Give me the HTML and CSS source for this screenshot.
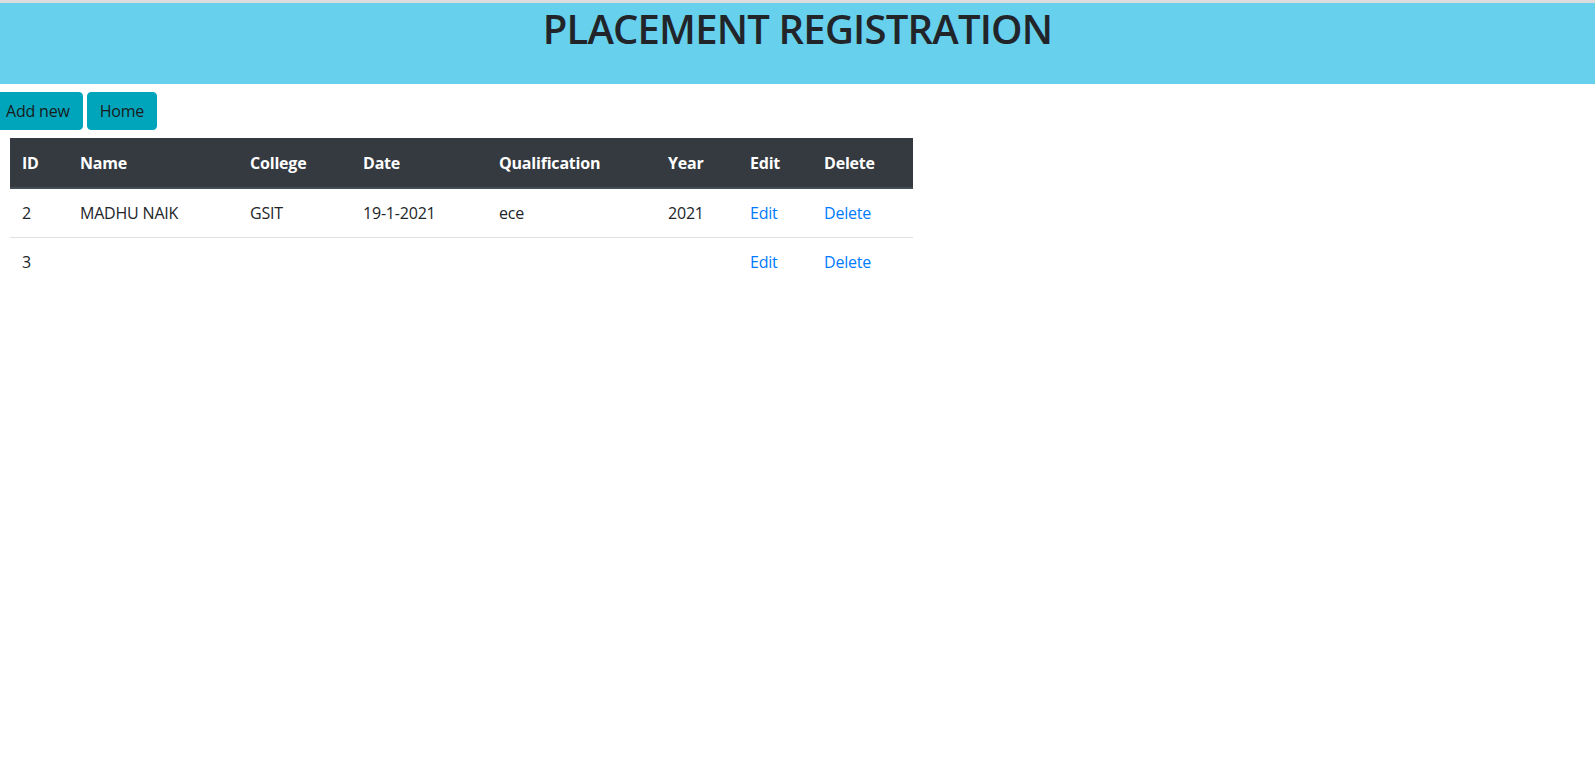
FILE: index.html
```html
<!DOCTYPE html>
<html lang="en">
<head>
<meta charset="utf-8">
<title>Placement Registration</title>
<link rel="stylesheet" href="styles.css">
</head>
<body>
<div class="topline"></div>
<header class="banner">
  <h1 class="title">PLACEMENT REGISTRATION</h1>
</header>
<div class="actions">
  <a class="btn btn-first" href="#">Add new</a>
  <a class="btn" href="#">Home</a>
</div>
<table class="grid">
  <thead>
    <tr>
      <th class="c-id">ID</th>
      <th class="c-name">Name</th>
      <th class="c-college">College</th>
      <th class="c-date">Date</th>
      <th class="c-qual">Qualification</th>
      <th class="c-year">Year</th>
      <th class="c-edit">Edit</th>
      <th class="c-del">Delete</th>
    </tr>
  </thead>
  <tbody>
    <tr>
      <td>2</td>
      <td>MADHU NAIK</td>
      <td>GSIT</td>
      <td>19-1-2021</td>
      <td>ece</td>
      <td>2021</td>
      <td><a href="#">Edit</a></td>
      <td><a href="#">Delete</a></td>
    </tr>
    <tr>
      <td>3</td>
      <td></td>
      <td></td>
      <td></td>
      <td></td>
      <td></td>
      <td><a href="#">Edit</a></td>
      <td><a href="#">Delete</a></td>
    </tr>
  </tbody>
</table>
</body>
</html>
```
FILE: styles.css
```css
html, body {
  margin: 0;
  padding: 0;
  background: #fff;
}
body {
  font-family: "Open Sans", "Noto Sans", sans-serif;
  font-size: 16px;
  line-height: 1.5;
  color: #212529;
  letter-spacing: -0.2px;
  overflow-x: hidden;
}
.topline {
  height: 3px;
  background: #dcdcdc;
}
.banner {
  background: #67d0ed;
  height: 81px;
  box-sizing: border-box;
  padding-top: 2px;
}
.title {
  margin: 0;
  text-align: center;
  font-size: 40px;
  font-weight: 600;
  line-height: 48px;
  letter-spacing: -0.8px;
  color: #212529;
}
.actions {
  margin-top: 8px;
  display: flex;
  gap: 4px;
}
.btn {
  display: inline-block;
  box-sizing: border-box;
  height: 38px;
  padding: 6px 12px;
  border: 1px solid #00a5bc;
  border-radius: 4px;
  background: #00a5bc;
  color: #1a1a1a;
  text-decoration: none;
  line-height: 24px;
}
.btn-first {
  margin-left: -7px;
}
.grid {
  margin: 8px 0 0 10px;
  border-collapse: collapse;
  width: 903px;
  table-layout: fixed;
}
.grid th,
.grid td {
  padding: 12px;
  text-align: left;
  vertical-align: top;
  line-height: 24px;
  white-space: nowrap;
}
.grid thead th {
  background: #343a40;
  color: #fff;
  font-weight: 700;
  border-bottom: 2px solid #454d55;
  border-top: 1px solid #343a40;
}
.grid tbody td {
  border-top: 1px solid #dee2e6;
}
.grid tbody tr:first-child td {
  border-top: none;
}
.grid a {
  color: #007bff;
  text-decoration: none;
}
.c-id { width: 34px; }
.c-name { width: 146px; }
.c-college { width: 89px; }
.c-date { width: 112px; }
.c-qual { width: 145px; }
.c-year { width: 58px; }
.c-edit { width: 50px; }
.c-del { width: 77px; }
```
